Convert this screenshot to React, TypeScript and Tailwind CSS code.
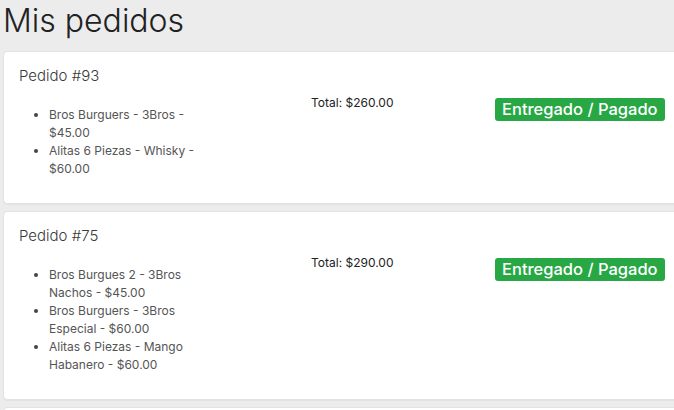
const orders = [
  {
    id: 93,
    total: "$260.00",
    items: ["Bros Burguers - 3Bros - $45.00", "Alitas 6 Piezas - Whisky - $60.00"],
  },
  {
    id: 75,
    total: "$290.00",
    items: [
      "Bros Burgues 2 - 3Bros Nachos - $45.00",
      "Bros Burguers - 3Bros Especial - $60.00",
      "Alitas 6 Piezas - Mango Habanero - $60.00",
    ],
  },
];

function OrderCard({ order }: { order: (typeof orders)[number] }) {
  return (
    <div className="ml-[3px] w-[720px] rounded-[4px] border border-[#e2e2e2] bg-white pl-[15px] pt-[13px] pb-[25px] shadow-[0_1px_1px_rgba(0,0,0,0.04)]">
      <h5 className="text-[15px] font-light leading-[22px] text-[#3a3a3a]">Pedido #{order.id}</h5>
      <div className="mt-[7px] flex">
        <div className="w-[292px] shrink-0">
          <ul className="mt-[12px] w-[182px] list-disc pl-[30px] text-[12px] leading-[18px] text-[#555] marker:text-[#444]">
            {order.items.map((item) => (
              <li key={item}>{item}</li>
            ))}
          </ul>
        </div>
        <div className="w-[184px] shrink-0 text-[12px] leading-[18px] text-[#222]">
          Total: {order.total}
        </div>
        <div className="pt-[3px]">
          <span className="inline-block rounded-[3px] bg-[#28a745] px-[7px] text-[16.5px] font-medium leading-[23px] text-white">
            Entregado / Pagado
          </span>
        </div>
      </div>
    </div>
  );
}

export default function App() {
  return (
    <div
      className="min-h-[410px] w-full overflow-hidden bg-[#ececec]"
      style={{ fontFamily: "Inter, 'Noto Sans', sans-serif" }}
    >
      <h1 className="pl-[3px] text-[32px] font-light leading-[42px] text-[#222]">Mis pedidos</h1>
      <div className="mt-[9px] flex flex-col gap-[7px]">
        {orders.map((order) => (
          <OrderCard key={order.id} order={order} />
        ))}
        <div className="ml-[3px] h-[40px] w-[720px] rounded-[4px] border border-[#e2e2e2] bg-white" />
      </div>
    </div>
  );
}
